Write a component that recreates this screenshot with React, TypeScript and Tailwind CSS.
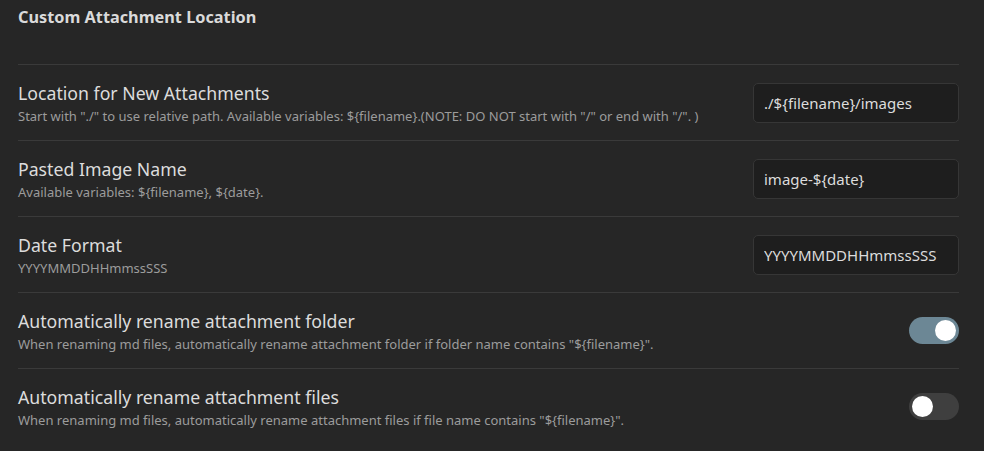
import { useState } from 'react';

type Row = {
   name: string;
   desc: string;
   kind: 'text' | 'toggle';
   value?: string;
   on?: boolean;
};

const rows: Row[] = [
   {
      name: 'Location for New Attachments',
      desc: 'Start with "./" to use relative path. Available variables: ${filename}.(NOTE: DO NOT start with "/" or end with "/". )',
      kind: 'text',
      value: './${filename}/images',
   },
   {
      name: 'Pasted Image Name',
      desc: 'Available variables: ${filename}, ${date}.',
      kind: 'text',
      value: 'image-${date}',
   },
   {
      name: 'Date Format',
      desc: 'YYYYMMDDHHmmssSSS',
      kind: 'text',
      value: 'YYYYMMDDHHmmssSSS',
   },
   {
      name: 'Automatically rename attachment folder',
      desc: 'When renaming md files, automatically rename attachment folder if folder name contains "${filename}".',
      kind: 'toggle',
      on: true,
   },
   {
      name: 'Automatically rename attachment files',
      desc: 'When renaming md files, automatically rename attachment files if file name contains "${filename}".',
      kind: 'toggle',
      on: false,
   },
];

const Toggle = ({ initial }: { initial: boolean }) => {
   const [on, setOn] = useState(initial);
   return (
      <button
         onClick={() => setOn(!on)}
         className={`w-[50px] h-[27px] rounded-full flex items-center px-[3px] shrink-0 ${
            on ? 'bg-[#6c8795] justify-end' : 'bg-[#3f3f3f] justify-start'
         }`}>
         <span className="w-[21px] h-[21px] rounded-full bg-white block" />
      </button>
   );
};

const App = () => {
   return (
      <div
         className="w-[984px] h-[451px] bg-[#262626] pl-[18px] pr-[25px] overflow-hidden"
         style={{ fontFamily: '"Noto Sans", "Open Sans", sans-serif' }}>
         <div className="h-[64px] pt-[5px]">
            <h3 className="text-[16.3px] font-bold text-[#dadada] leading-[24px]">
               Custom Attachment Location
            </h3>
         </div>
         {rows.map((row, idx) => (
            <div
               key={idx}
               className="h-[76px] border-t border-[#3a3a3a] flex items-center justify-between">
               <div className="flex flex-col">
                  <span className="text-[17.7px] text-[#dcdcdc] leading-[24px]">{row.name}</span>
                  <span className="text-[13px] text-[#9c9c9c] leading-[18px] mt-[2px]">
                     {row.desc}
                  </span>
               </div>
               {row.kind === 'text' ? (
                  <input
                     defaultValue={row.value}
                     className="w-[206px] h-[40px] rounded-[5px] bg-[#1e1e1e] border border-[#363636] px-[10px] text-[15px] text-[#dcdcdc] outline-none"
                  />
               ) : (
                  <Toggle initial={!!row.on} />
               )}
            </div>
         ))}
      </div>
   );
};

export default App;
